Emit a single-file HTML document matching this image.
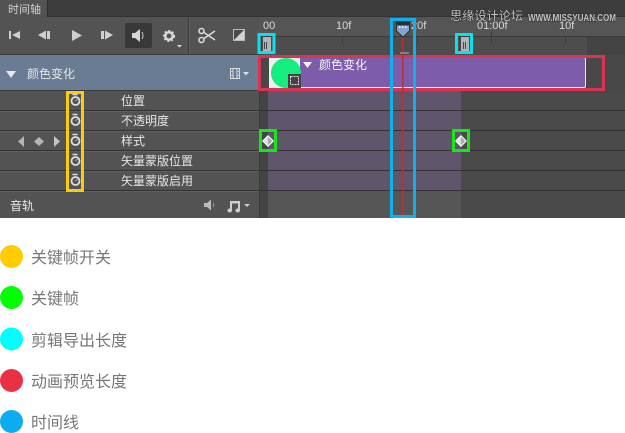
<!DOCTYPE html>
<html>
<head>
<meta charset="utf-8">
<style>
html,body{margin:0;padding:0;background:#fff;width:625px;height:433px;overflow:hidden}
svg{display:block}
text{font-family:"Liberation Sans","Noto Sans CJK SC",sans-serif}
.p{font-size:12px;fill:#e6e6e6}
.l{font-size:16px;fill:#777}
.r{font-size:11px;fill:#d8d8d8}
</style>
</head>
<body>
<svg width="625" height="433" viewBox="0 0 625 433" xmlns="http://www.w3.org/2000/svg">
<defs>
<g id="sw" fill="none" stroke="#dedede">
<circle cx="0" cy="1" r="4" stroke-width="1.8"/>
<path d="M-3-5.500H2" stroke-width="1.500"/>
<path d="M0 1L2-1" stroke-width="1" stroke="#aaa"/>
</g>
<g id="kf">
<path d="M0-6L6 0L0 6L-6 0Z" fill="#fff"/>
<path d="M0-4.500L4.500 0L0 4.500Z" fill="#aaa"/>
<path d="M0-4.500L-4.500 0L0 4.500Z" fill="#ddd"/>
</g>
</defs>
<!-- panel base -->
<rect width="625" height="218" fill="#535353"/>
<rect width="625" height="17" fill="#3d3d3d"/>
<rect x="0" y="0" width="47" height="17" fill="#535353"/>
<rect x="47" y="0" width="1" height="17" fill="#2c2c2c"/>
<rect x="48" y="16" width="577" height="1" fill="#333"/>
<text x="8" y="13" style="font-size:11px;fill:#d0d0d0">时间轴</text>

<!-- toolbar icons -->
<g fill="#cfcfcf">
<path d="M9 31h2v8H9zM20 31v8l-8-4z"/>
<path d="M38 35l8-4.500v9zM47 31h3v8h-3z"/>
<path d="M72 30l10 5.500-10 5.500z"/>
<path d="M101 31h3v8h-3zM105 30.500l8 4.500-8 4.500z"/>
</g>
<rect x="125" y="23" width="27" height="25" rx="2" fill="#383838"/>
<path d="M132 33h3l5-4v13l-5-4h-3z" fill="#d6d6d6"/>
<path d="M142 32q2 3.500 0 7" stroke="#ccc" fill="none"/>
<circle cx="169" cy="36" r="3.700" fill="none" stroke="#d8d8d8" stroke-width="2.500"/>
<circle cx="169" cy="36" r="5.300" fill="none" stroke="#d8d8d8" stroke-width="1.500" stroke-dasharray="2 2"/>
<path d="M177 45h5l-2.500 2.500z" fill="#ddd"/>
<rect x="188" y="18" width="1" height="36" fill="#3a3a3a"/>
<rect x="189" y="18" width="1" height="36" fill="#606060"/>
<g fill="none" stroke="#d8d8d8">
<circle cx="201.500" cy="31" r="2.500" stroke-width="1.600"/>
<circle cx="201.500" cy="40" r="2.500" stroke-width="1.600"/>
<path d="M204 32.500L215 40M204 38.500L215 31" stroke-width="1.600"/>
</g>
<rect x="233" y="29" width="12" height="12" fill="#d4d4d4"/>
<path d="M233 29H245L233 41Z" fill="#4a4a4a"/>
<rect x="233.500" y="29.500" width="11" height="11" fill="none" stroke="#bbb"/>

<!-- right area ruler/track -->
<rect x="259" y="17" width="366" height="20" fill="#555"/>
<rect x="259" y="37" width="366" height="18" fill="#4d4d4d"/>
<rect x="587" y="37" width="38" height="18" fill="#444"/>
<rect x="259" y="36" width="366" height="1" fill="#3a3a3a"/>
<g fill="#3a3a3a">
<rect x="342" y="37" width="1" height="6"/>
<rect x="417" y="37" width="1" height="6"/>
<rect x="491" y="31" width="1" height="12"/>
<rect x="565" y="37" width="1" height="6"/>
</g>
<text x="263" y="29" class="r">00</text>
<text x="336" y="29" class="r">10f</text>
<text x="411" y="29" class="r">20f</text>
<text x="477" y="29" class="r">01:00f</text>
<text x="559" y="29" class="r">10f</text>

<!-- watermark -->
<text x="450" y="20" style="font-size:12.200px;fill:#c4c4c4;stroke:#262626;stroke-width:1px;paint-order:stroke">思缘设计论坛</text>
<text x="528" y="21" textLength="88" lengthAdjust="spacingAndGlyphs" style="font-size:10.500px;font-weight:bold;fill:#c4c4c4;stroke:#262626;stroke-width:1px;paint-order:stroke">WWW.MISSYUAN.COM</text>

<!-- layer row -->
<rect x="0" y="55" width="259" height="35" fill="#6a7c94"/>
<rect x="0" y="54" width="259" height="1" fill="#3c3c3c"/>
<rect x="0" y="90" width="259" height="1" fill="#3a3a3a"/>
<path d="M6 71h10l-5 7z" fill="#e8e8e8"/>
<text x="27" y="78" class="p">颜色变化</text>
<g>
<rect x="230.500" y="68.500" width="9" height="10" fill="none" stroke="#ddd"/>
<path d="M233 68v11M237 68v11" stroke="#d5d9df" fill="none"/>
<path d="M230 71.500h3M230 75.500h3M237 71.500h3M237 75.500h3" stroke="#c2c8d1" fill="none"/>
<path d="M243 72h6l-3 3.500z" fill="#ddd"/>
</g>

<!-- right track backgrounds -->
<rect x="259" y="55" width="366" height="35" fill="#484848"/>
<rect x="259" y="90" width="366" height="128" fill="#4a4a4a"/>
<rect x="259" y="90" width="9" height="128" fill="#444"/>
<rect x="268" y="90" width="193" height="100" fill="#5f566c"/>
<rect x="268" y="190" width="193" height="28" fill="#565656"/>
<rect x="259" y="190" width="1" height="28" fill="#4a4a4a"/>

<!-- row lines -->
<g fill="#323232">
<rect x="0" y="110" width="625" height="1"/>
<rect x="0" y="130" width="625" height="1"/>
<rect x="0" y="150" width="625" height="1"/>
<rect x="0" y="170" width="625" height="1"/>
<rect x="0" y="190" width="625" height="1"/>
</g>
<g fill="#5f5f5f">
<rect x="0" y="111" width="259" height="1"/>
<rect x="0" y="131" width="259" height="1"/>
<rect x="0" y="151" width="259" height="1"/>
<rect x="0" y="171" width="259" height="1"/>
<rect x="0" y="191" width="259" height="1"/>
</g>
<rect x="259" y="55" width="1" height="163" fill="#3a3a3a"/>

<!-- property labels -->
<text x="121" y="105" class="p">位置</text>
<text x="121" y="125" class="p">不透明度</text>
<text x="121" y="145" class="p">样式</text>
<text x="121" y="165" class="p">矢量蒙版位置</text>
<text x="121" y="185" class="p">矢量蒙版启用</text>

<!-- stopwatches -->
<use href="#sw" x="75.500" y="100"/>
<use href="#sw" x="75.500" y="120"/>
<use href="#sw" x="75.500" y="140"/>
<use href="#sw" x="75.500" y="160"/>
<use href="#sw" x="75.500" y="180"/>

<!-- nav diamonds -->
<path d="M24 136v11l-6-5.500z" fill="#b5b5b5"/>
<path d="M39 137l5 4.500-5 4.500-5-4.500z" fill="#b5b5b5"/>
<path d="M54 136v11l6-5.500z" fill="#c5c5c5"/>

<!-- audio row -->
<text x="10" y="210" class="p">音轨</text>
<path d="M204 203h3l4-3.500v11l-4-3.500h-3z" fill="#bbb"/>
<path d="M213 203q1.500 2 0 4" stroke="#999" fill="none"/>
<path d="M230 201h10v9.500a2.300 2 0 1 1-2-2v-5h-6v7a2.300 2 0 1 1-2-2z" fill="#cfcfcf"/>
<path d="M244 204h6l-3 3z" fill="#ccc"/>

<!-- clip -->
<rect x="269" y="57" width="317" height="31" rx="1.500" fill="#7c5cab"/>
<rect x="269.500" y="57.500" width="316" height="30" rx="1.500" fill="none" stroke="#efe6f5"/>
<rect x="269" y="57" width="31" height="31" fill="#efefef"/>
<circle cx="286" cy="73" r="15" fill="#14ee80"/>
<rect x="288" y="74" width="13" height="14" fill="#444"/>
<rect x="290.500" y="76.500" width="8" height="8" fill="none" stroke="#e5e5e5" stroke-dasharray="2 1"/>
<path d="M303 62h9l-4.500 6z" fill="#f2f2f2"/>
<text x="319" y="69" class="p" style="fill:#f4f4f4">颜色变化</text>

<!-- red box -->
<rect x="259.500" y="56.500" width="344" height="33" fill="none" stroke="#d93451" stroke-width="3"/>

<!-- playhead -->
<rect x="402" y="37" width="1.500" height="179" fill="#b5303e"/>
<rect x="400" y="52" width="9" height="2" fill="#808080"/>
<path d="M396.500 22h13v9l-6.500 6-6.500-6z" fill="#7fa6d4" stroke="#2e3035"/>
<path d="M397 22.500h12v3h-12z" fill="#2e3035"/>
<path d="M399 26h1.500v2H399zM402 26h1.500v2H402zM405 26h1.500v2H405z" fill="#e9eef5"/>

<!-- cyan boxes -->
<g fill="#b3b3b3">
<rect x="261" y="37" width="10" height="17"/>
<rect x="459" y="37" width="10" height="17"/>
</g>
<g fill="#444">
<rect x="261" y="37" width="2" height="17"/>
<rect x="459" y="37" width="2" height="17"/>
<rect x="264" y="42" width="1" height="7"/>
<rect x="266" y="42" width="1" height="7"/>
<rect x="463" y="42" width="1" height="7"/>
<rect x="465" y="42" width="1" height="7"/>
</g>
<rect x="259" y="34.500" width="15" height="18" fill="none" stroke="#0ce0ee" stroke-width="3"/>
<rect x="456.500" y="34.500" width="15" height="18" fill="none" stroke="#0ce0ee" stroke-width="3"/>

<!-- keyframes -->
<use href="#kf" x="268" y="141"/>
<use href="#kf" x="461" y="141"/>
<rect x="260.500" y="130.500" width="15" height="20" fill="none" stroke="#17e71a" stroke-width="3"/>
<rect x="453.500" y="130.500" width="15" height="20" fill="none" stroke="#17e71a" stroke-width="3"/>

<!-- yellow box -->
<rect x="67.500" y="92.500" width="15" height="98" fill="none" stroke="#fbcb0f" stroke-width="3"/>

<!-- blue box -->
<rect x="391.500" y="19.500" width="23" height="197" fill="none" stroke="#12afea" stroke-width="3"/>

<!-- legend -->
<circle cx="11.500" cy="256.500" r="11.500" fill="#ffcc00"/>
<circle cx="11.500" cy="297.500" r="11.500" fill="#00ff00"/>
<circle cx="11.500" cy="339" r="11.500" fill="#00ffff"/>
<circle cx="11.500" cy="380.500" r="11.500" fill="#ea3045"/>
<circle cx="11.500" cy="421.500" r="11.500" fill="#0cacf0"/>
<text x="31" y="263" class="l">关键帧开关</text>
<text x="31" y="304" class="l">关键帧</text>
<text x="31" y="346" class="l">剪辑导出长度</text>
<text x="31" y="387" class="l">动画预览长度</text>
<text x="31" y="428" class="l">时间线</text>
</svg>
</body>
</html>
